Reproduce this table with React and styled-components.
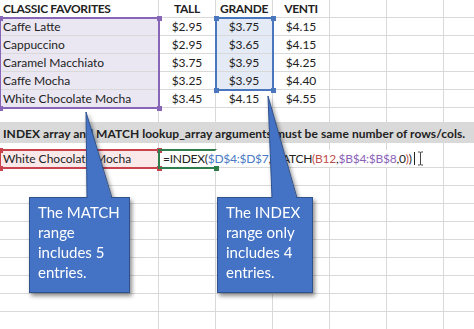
import React from 'react'
import styled, { createGlobalStyle } from 'styled-components'

const line = '#d9d9d9'

const Global = createGlobalStyle`
  body {
    margin: 0;
    background: #fff;
    font-family: Lato, "Liberation Sans", sans-serif;
    color: #222;
  }
`

const Page = styled.div`
  position: relative;
  width: 474px;
  height: 329px;
  overflow: hidden;
`

const Sheet = styled.div`
  display: grid;
  grid-template-columns: 159px repeat(6, 57px);
  grid-template-rows: repeat(6, 18px) 15px 20px 7px 18px repeat(9, 18px);
`

const Cell = styled.div`
  grid-row: ${p => p.$row};
  grid-column: ${p => p.$col} / span ${p => p.$span || 1};
  box-sizing: border-box;
  border-right: 1px solid ${line};
  border-bottom: ${p => (p.$open ? 'none' : `1px solid ${line}`)};
  background: ${p => p.$tint || 'transparent'};
  font-size: 12px;
  font-weight: ${p => (p.$bold ? 700 : 400)};
  letter-spacing: ${p => (p.$bold ? -0.35 : p.$span ? -0.25 : 0)}px;
  line-height: 18px;
  white-space: nowrap;
  text-align: ${p => (p.$col === 1 || p.$span ? 'left' : 'center')};
  padding-left: ${p => (p.$span ? 4 : p.$col === 1 ? 3 : 0)}px;
`

const Band = styled.div`
  grid-row: 8;
  grid-column: 1 / -1;
  background: #d9d9d9;
  font-size: 12px;
  font-weight: 700;
  letter-spacing: 0.05px;
  line-height: 20px;
  padding: 1px 0 0 3px;
  white-space: nowrap;
`

const Range = styled.div`
  grid-row: ${p => p.$row} / span ${p => p.$rows || 1};
  grid-column: ${p => p.$col} / span ${p => p.$cols || 1};
  margin: -1px;
  border: 2px solid ${p => p.$color};
  ${p => p.$open && 'border-right-color: transparent;'}
  position: relative;
  z-index: 1;
`

const Handle = styled.span`
  position: absolute;
  width: 5px;
  height: 5px;
  background: ${p => p.$color};
  ${p => (p.$at[0] === 't' ? 'top: -3.5px;' : 'bottom: -3.5px;')}
  ${p => (p.$at[1] === 'l' ? 'left: -3.5px;' : 'right: -3.5px;')}
`

const Ref = styled.span`
  color: ${p => p.$c};
`

const Caret = styled.span`
  display: inline-block;
  width: 1px;
  height: 13px;
  background: #222;
  margin-left: 2px;
  vertical-align: -2px;
`

const Callout = styled.div`
  position: absolute;
  left: ${p => p.$x}px;
  top: ${p => p.$y}px;
  width: ${p => p.$w}px;
  height: 96px;
  box-sizing: border-box;
  background: #4472c4;
  border: 1px solid #2f528f;
  padding: 4px 0 0 ${p => p.$pad}px;
  color: #fff;
  font-size: 15px;
  line-height: 20px;
  filter: drop-shadow(2px 3px 2px rgba(0, 0, 0, 0.45));
  z-index: 2;
`

const Pointer = styled.svg`
  position: absolute;
  left: -1px;
  overflow: visible;
`

const Line = styled.div`
  white-space: nowrap;
`

const header = ['CLASSIC FAVORITES', 'TALL', 'GRANDE', 'VENTI']
const drinks = [
  ['Caffe Latte', '$2.95', '$3.75', '$4.15'],
  ['Cappuccino', '$2.95', '$3.65', '$4.15'],
  ['Caramel Macchiato', '$3.75', '$3.95', '$4.25'],
  ['Caffe Mocha', '$3.25', '$3.95', '$4.40'],
  ['White Chocolate Mocha', '$3.45', '$4.15', '$4.55'],
]
const cols = [1, 2, 3, 4, 5, 6, 7]

function Corners({ color, at = ['tl', 'tr', 'bl', 'br'] }) {
  return at.map(a => <Handle key={a} $at={a} $color={color} />)
}

function IBeam() {
  return (
    <svg width="7" height="15" viewBox="0 0 7 15" style={{ verticalAlign: -3, marginLeft: 2 }}>
      <path d="M1 1h1.5q1 0 1 1v11q0 1-1 1H1M6 1H4.5q-1 0-1 1M6 14H4.5q-1 0-1-1" fill="none" stroke="#444" strokeWidth="1" />
    </svg>
  )
}

function Bubble({ x, w, pad, tip, base, lines }) {
  const h = -tip[1]
  return (
    <Callout $x={x} $y={197} $w={w} $pad={pad}>
      <Pointer width={w} height={h + 3} style={{ top: -h - 1 }} viewBox={`0 0 ${w} ${h + 3}`}>
        <polygon points={`${tip[0]},0 ${base[0]},${h + 3} ${base[1]},${h + 3}`} fill="#4472c4" />
        <path d={`M${base[0]} ${h + 1}L${tip[0]} 0L${base[1]} ${h + 1}`} fill="none" stroke="#2f528f" strokeWidth="1" />
      </Pointer>
      {lines.map(l => <Line key={l}>{l}</Line>)}
    </Callout>
  )
}

export default function App() {
  const cells = []
  const rows = [header, ...drinks]
  rows.forEach((r, i) => {
    cols.forEach(c => {
      cells.push(
        <Cell key={`r${i}c${c}`} $row={i + 1} $col={c} $bold={i === 0}
          $tint={i > 0 && c === 1 ? '#ebe7f2' : i > 0 && i < 5 && c === 3 ? '#e4ebf6' : null}>
          {r[c - 1] || ''}
        </Cell>
      )
    })
  })
  cols.forEach(c => {
    cells.push(<Cell key={`r7c${c}`} $row={7} $col={c} />)
    cells.push(<Cell key={`r9c${c}`} $row={9} $col={c} $open />)
  })
  for (let r = 11; r <= 19; r++) {
    cols.forEach(c => cells.push(<Cell key={`r${r}c${c}`} $row={r} $col={c} />))
  }

  return (
    <Page>
      <Global />
      <Sheet>
        {cells}
        <Band>INDEX array and MATCH lookup_array arguments must be same number of rows/cols.</Band>
        <Cell $row={10} $col={1} $tint="#fbe9ea">White Chocolate Mocha</Cell>
        <Cell $row={10} $col={2} $span={5}>
          =INDEX(<Ref $c="#4a7bc4">$D$4:$D$7</Ref>,MATCH<Ref $c="#c0504d">(B12</Ref>,
          <Ref $c="#8a63b8">$B$4:$B$8</Ref>,0<Ref $c="#c0504d">)</Ref>)<Caret /><IBeam />
        </Cell>
        <Cell $row={10} $col={7} />

        <Range $row={2} $rows={5} $col={1} $color="#8766b8"><Corners color="#8766b8" /></Range>
        <Range $row={2} $rows={4} $col={3} $color="#4a76bd"><Corners color="#4a76bd" /></Range>
        <Range $row={10} $col={1} $color="#c8434c"><Corners color="#c8434c" /></Range>
        <Range $row={10} $col={2} $color="#2f7d4a" $open><Corners color="#2f7d4a" at={['br']} /></Range>
      </Sheet>

      <Bubble x={29} w={101} pad={8} tip={[57, -85]} base={[58, 83]}
        lines={['The MATCH', 'range', 'includes 5', 'entries.']} />
      <Bubble x={217} w={96} pad={8} tip={[51, -101]} base={[55, 80]}
        lines={['The INDEX', 'range only', 'includes 4', 'entries.']} />
    </Page>
  )
}
